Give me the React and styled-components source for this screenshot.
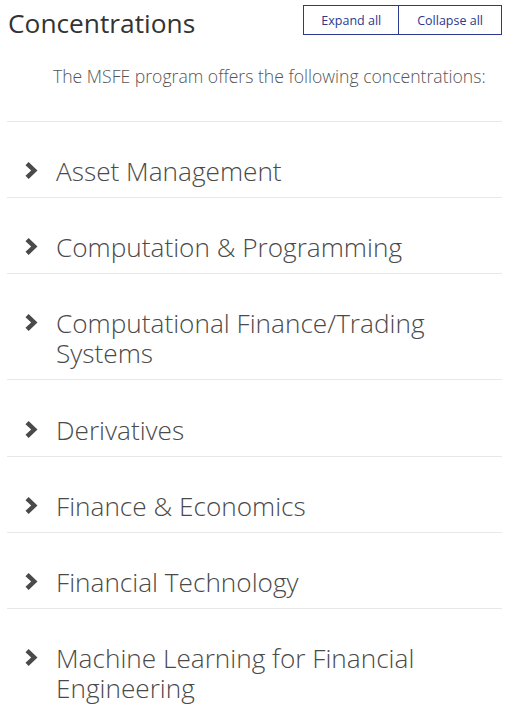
import React from 'react';
import styled, { createGlobalStyle } from 'styled-components';

const GlobalStyle = createGlobalStyle`
  body {
    margin: 0;
    background: #fff;
    font-family: "Open Sans", "Liberation Sans", sans-serif;
  }
`;

const Page = styled.div`
  width: 512px;
  padding: 5px 10px 0 7px;
  box-sizing: border-box;
`;

const Header = styled.div`
  display: flex;
  justify-content: space-between;
  align-items: flex-start;
`;

const Title = styled.h2`
  margin: 3px 0 0 1px;
  font-size: 26.3px;
  font-weight: 400;
  color: #333;
  line-height: 30px;
`;

const ButtonGroup = styled.div`
  display: flex;
  border: 1px solid #2b3990;
`;

const ToggleButton = styled.button`
  height: 28px;
  padding: 0 ${(p) => p.$pad}px;
  background: #fff;
  border: none;
  border-left: ${(p) => (p.$divider ? '1px solid #2b3990' : 'none')};
  color: #2b3990;
  font-family: "Open Sans", "Liberation Sans", sans-serif;
  font-size: 12.5px;
  cursor: pointer;
`;

const Intro = styled.p`
  margin: 0;
  padding: 27px 0 34px 46px;
  font-size: 17.6px;
  font-weight: 350;
  color: #555;
  line-height: 22px;
  white-space: nowrap;
  border-bottom: 1px solid #e8e8e8;
`;

const List = styled.div`
  display: flex;
  flex-direction: column;
`;

const Item = styled.div`
  display: flex;
  align-items: flex-start;
  padding: 34.15px 0 11px;
  border-bottom: 1px solid #e8e8e8;
  cursor: pointer;
`;

const Chevron = styled.svg`
  flex: none;
  width: 13px;
  height: 17px;
  margin: 6px 18px 0 18px;
`;

const Label = styled.span`
  font-size: 26.2px;
  font-weight: 350;
  line-height: 30px;
  color: #4a4a4a;
`;

const concentrations = [
  'Asset Management',
  'Computation & Programming',
  'Computational Finance/Trading Systems',
  'Derivatives',
  'Finance & Economics',
  'Financial Technology',
  'Machine Learning for Financial Engineering',
];

const ChevronIcon = () => (
  <Chevron viewBox="0 0 13 17">
    <path d="M0.5 3.2 L3.6 0 L12.5 8.5 L3.6 17 L0.5 13.8 L6.2 8.5 Z" fill="#4a4a4a" />
  </Chevron>
);

const App = () => (
  <Page>
    <GlobalStyle />
    <Header>
      <Title>Concentrations</Title>
      <ButtonGroup>
        <ToggleButton $pad={17}>Expand all</ToggleButton>
        <ToggleButton $pad={18} $divider>Collapse all</ToggleButton>
      </ButtonGroup>
    </Header>
    <Intro>The MSFE program offers the following concentrations:</Intro>
    <List>
      {concentrations.map((name) => (
        <Item key={name}>
          <ChevronIcon />
          <Label>{name}</Label>
        </Item>
      ))}
    </List>
  </Page>
);

export default App;
